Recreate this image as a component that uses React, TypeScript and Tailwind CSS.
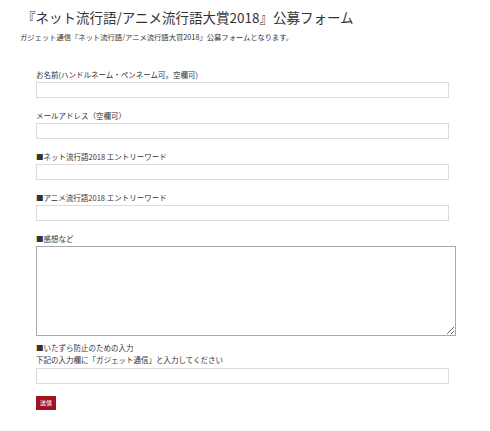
import React from "react";

const fields = [
    { label: "お名前(ハンドルネーム・ペンネーム可。空欄可)" },
    { label: "メールアドレス（空欄可）" },
    { label: "■ネット流行語2018 エントリーワード" },
    { label: "■アニメ流行語2018 エントリーワード" },
];

const App = () => {
    return <div className="w-[490px] h-[431px] bg-white text-[#333] font-['Noto_Sans_CJK_JP','Noto_Sans',sans-serif]">
        <div className="pl-[22px] pt-[8px] text-[13.5px] leading-[18px]">『ネット流行語/アニメ流行語大賞2018』公募フォーム</div>
        <div className="pl-[20px] mt-[6px] text-[7.3px] leading-[10px]">ガジェット通信『ネット流行語/アニメ流行語大賞2018』公募フォームとなります。</div>
        <form className="pl-[36px] pt-[28px] flex flex-col">
            {fields.map((f, i) => (
                <div key={i} className="flex flex-col mb-[13px]">
                    <label className="text-[7.5px] leading-[10px]">{f.label}</label>
                    <input type="text" className="mt-[2px] w-[413px] h-[16px] border border-[#dcdcdc] bg-white outline-none" />
                </div>
            ))}
            <div className="flex flex-col">
                <label className="text-[7.5px] leading-[10px]">■感想など</label>
                <textarea className="mt-[2px] w-[420px] h-[90px] border border-[#a9a9a9] bg-white outline-none block" />
            </div>
            <div className="flex flex-col mt-[6px]">
                <label className="text-[7.5px] leading-[12px]">■いたずら防止のための入力</label>
                <div className="text-[7.5px] leading-[12px]">下記の入力欄に「ガジェット通信」と入力してください</div>
                <input type="text" className="mt-[2px] w-[413px] h-[16px] border border-[#dcdcdc] bg-white outline-none" />
            </div>
            <div className="flex mt-[12px]">
                <button type="button" className="w-[20px] h-[14px] bg-[#a3121d] text-white text-[6px] leading-[14px] text-center">送信</button>
            </div>
        </form>
    </div>;
};

export default App;
